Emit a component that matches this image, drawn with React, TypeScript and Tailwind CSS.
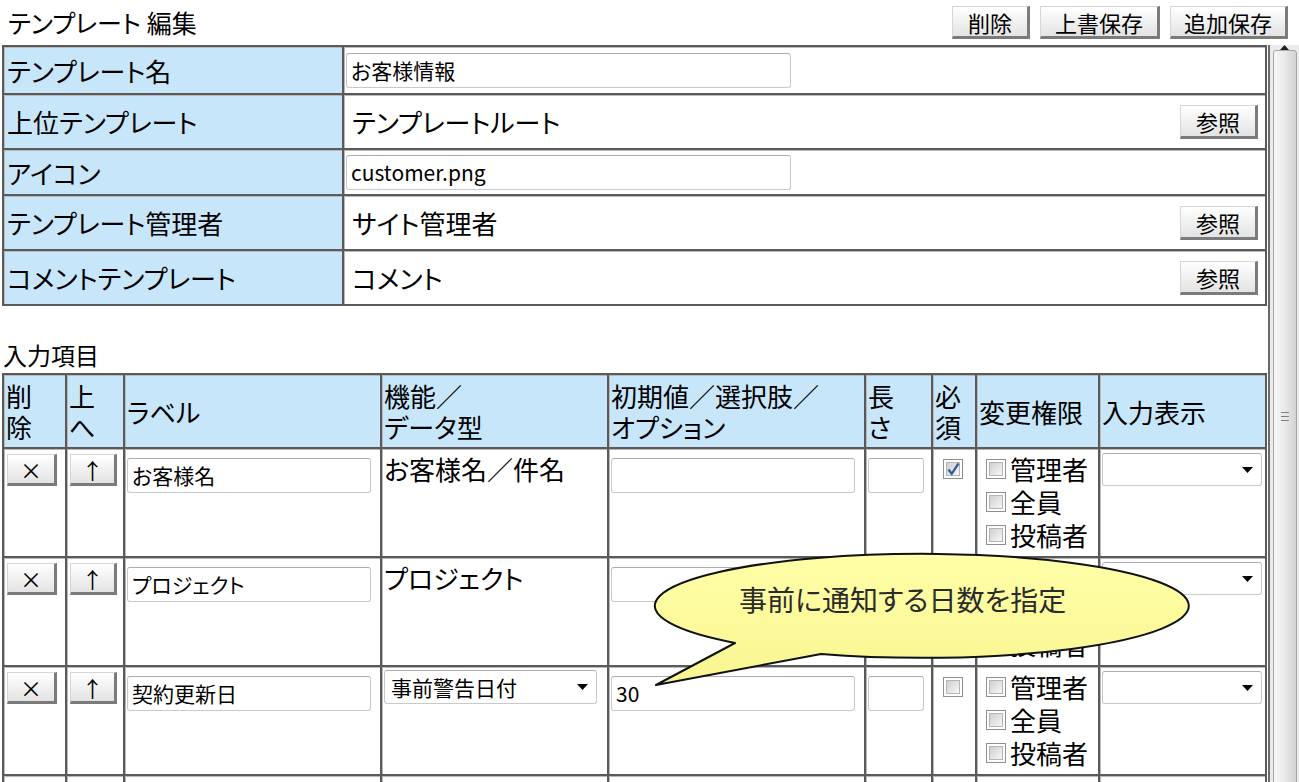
import type { ReactNode } from "react";

const border = "border-l-2 border-t-2 border-[#5a5a5a] shadow-[inset_1px_1px_0_#b8b8b8]";

function Btn({ children, className = "" }: { children: ReactNode; className?: string }) {
  return (
    <button
      type="button"
      className={`flex shrink-0 items-center justify-center border-t border-l border-[#d6d6d6] border-r-[3px] border-b-[3px] border-r-[#7b7b7b] border-b-[#7b7b7b] bg-linear-to-b from-white to-[#e3e3e3] text-[22px] leading-none text-black ${className}`}
    >
      {children}
    </button>
  );
}

function TextBox({ value = "", className = "" }: { value?: string; className?: string }) {
  return (
    <input
      readOnly
      defaultValue={value}
      className={`h-[35px] rounded-[3px] border border-[#c6c9cd] border-t-[#abadb3] bg-white px-[4px] text-[21px] text-black outline-none ${className}`}
    />
  );
}

function Select({ value = "", className = "" }: { value?: string; className?: string }) {
  return (
    <div
      className={`flex h-[33px] items-center justify-between rounded-[3px] border border-[#c6c9cd] border-t-[#abadb3] bg-white pl-[6px] pr-[8px] text-[21px] ${className}`}
    >
      <span>{value}</span>
      <svg width="11" height="6" viewBox="0 0 11 6">
        <path d="M0 0h11L5.5 6z" fill="#000" />
      </svg>
    </div>
  );
}

function Check({ checked = false }: { checked?: boolean }) {
  return (
    <span className="relative inline-flex size-[20px] shrink-0 border border-[#8e8f8f] bg-white p-[2px]">
      <span className="block size-full border border-[#b4b4b4] bg-linear-to-br from-[#cfcfcf] to-[#f7f7f7]" />
      {checked && (
        <svg className="absolute left-[3px] top-[2px]" width="13" height="14" viewBox="0 0 13 14">
          <path d="M1.5 7.5l3.2 4.3L11.5 1.5" fill="none" stroke="#3b5a9a" strokeWidth="2.3" />
        </svg>
      )}
    </span>
  );
}

const props = [
  { label: "テンプレート名", input: "お客様情報", h: "h-[48px]" },
  { label: "上位テンプレート", text: "テンプレートルート", ref: true, h: "h-[55px]" },
  { label: "アイコン", input: "customer.png", h: "h-[46px]" },
  { label: "テンプレート管理者", text: "サイト管理者", ref: true, h: "h-[55px]" },
  { label: "コメントテンプレート", text: "コメント", ref: true, h: "h-[55px]" },
];

function PropsTable() {
  return (
    <div className="grid w-[1265px] grid-cols-[340px_923px] border-r-2 border-b-2 border-[#5a5a5a] text-[26px]">
      {props.map((p) => (
        <div key={p.label} className="contents">
          <div className={`${border} ${p.h} flex items-center bg-[#c8e6fa] pl-[3px]`}>{p.label}</div>
          <div className={`${border} ${p.h} flex items-center justify-between pl-[2px] pr-[7px]`}>
            {p.input !== undefined ? (
              <TextBox value={p.input} className="w-[445px]" />
            ) : (
              <span className="pl-[6px]">{p.text}</span>
            )}
            {p.ref && <Btn className="h-[34px] w-[78px]">参照</Btn>}
          </div>
        </div>
      ))}
    </div>
  );
}

const heads = [
  ["削", "除"],
  ["上", "へ"],
  ["ラベル"],
  ["機能／", "データ型"],
  ["初期値／選択肢／", "オプション"],
  ["長", "さ"],
  ["必", "須"],
  ["変更権限"],
  ["入力表示"],
];

type Row = { label: string; func?: string; funcSelect?: string; init?: string; required?: boolean };

const rows: Row[] = [
  { label: "お客様名", func: "お客様名／件名", required: true },
  { label: "プロジェクト", func: "プロジェクト" },
  { label: "契約更新日", funcSelect: "事前警告日付", init: "30" },
];

function FieldsTable() {
  return (
    <div className="grid w-[1265px] grid-cols-[63px_58px_257px_227px_257px_67px_44px_123px_167px] border-r-2 border-[#5a5a5a] text-[26px]">
      {heads.map((h, i) => (
        <div key={i} className={`${border} flex h-[74px] flex-col justify-center bg-[#c8e6fa] pl-[2px] leading-[31px]`}>
          {h.map((l) => (
            <span key={l}>{l}</span>
          ))}
        </div>
      ))}
      {rows.map((r, i) => (
        <div key={i} className="contents">
          <div className={`${border} h-[109px] pl-[3px] pt-[5px]`}>
            <Btn className="h-[32px] w-[50px] text-[17px]">×</Btn>
          </div>
          <div className={`${border} h-[109px] pl-[3px] pt-[5px]`}>
            <Btn className="h-[32px] w-[47px] text-[20px]">↑</Btn>
          </div>
          <div className={`${border} h-[109px] pl-[2px] pt-[4px]`}>
            <TextBox value={r.label} className="w-[244px]" />
          </div>
          <div className={`${border} h-[109px] pl-[2px] pt-[3px] leading-[33px]`}>
            {r.funcSelect ? <Select value={r.funcSelect} className="h-[34px] w-[213px]" /> : r.func}
          </div>
          <div className={`${border} h-[109px] pl-[2px] pt-[4px]`}>
            <TextBox value={r.init} className="w-[244px]" />
          </div>
          <div className={`${border} h-[109px] pl-[2px] pt-[4px]`}>
            <TextBox className="w-[56px]" />
          </div>
          <div className={`${border} flex h-[109px] justify-center pt-[10px] pr-[3px]`}>
            <Check checked={r.required} />
          </div>
          <div className={`${border} flex h-[109px] flex-col pl-[9px] pt-[3px] leading-[33px]`}>
            {["管理者", "全員", "投稿者"].map((t) => (
              <label key={t} className="flex items-center gap-[4px]">
                <Check />
                {t}
              </label>
            ))}
          </div>
          <div className={`${border} h-[109px] pl-[2px] pt-[4px]`}>
            <Select className="w-[160px]" />
          </div>
        </div>
      ))}
      {heads.map((_, i) => (
        <div key={`next-${i}`} className={`${border} h-[109px]`} />
      ))}
    </div>
  );
}

function Scrollbar() {
  return (
    <div className="flex w-[31px] flex-col items-center border-l-2 border-[#6a6a6a] bg-[#ebebeb]">
      <div className="flex h-[30px] w-full items-center justify-center">
        <svg width="9" height="5" viewBox="0 0 9 5">
          <path d="M0 5h9L4.5 0z" fill="#222" />
        </svg>
      </div>
      <div className="flex h-[760px] w-[24px] shrink-0 justify-center rounded-t-[3px] border border-[#a6a6a6] bg-linear-to-r from-[#f7f7f7] via-[#e9e9e9] to-[#d2d2d2] pt-[361px]">
        <div className="flex h-[9px] w-[8px] flex-col justify-between">
          <span className="h-px bg-[#808080]" />
          <span className="h-px bg-[#808080]" />
          <span className="h-px bg-[#808080]" />
        </div>
      </div>
    </div>
  );
}

function Callout() {
  return (
    <svg className="pointer-events-none absolute left-0 top-0" width="1299" height="782" viewBox="0 0 1299 782">
      <defs>
        <linearGradient id="cg" x1="0" y1="0" x2="0" y2="1">
          <stop offset="0" stopColor="#ffffa8" />
          <stop offset="1" stopColor="#f8f590" />
        </linearGradient>
      </defs>
      <path
        d="M735 643 L656 685 L821 654 A267 52 0 1 0 735 643 Z"
        fill="url(#cg)"
        stroke="#111"
        strokeWidth="2"
        strokeLinejoin="round"
      />
      <text
        x="739"
        y="599"
        dominantBaseline="central"
        fontSize="28"
        fill="#2b2b2b"
        fontFamily="'Noto Sans CJK JP', sans-serif"
      >
        事前に通知する日数を指定
      </text>
    </svg>
  );
}

export default function App() {
  return (
    <div className="relative h-[782px] w-[1299px] overflow-hidden bg-white font-['Noto_Sans_CJK_JP','Noto_Sans',sans-serif] text-black [font-feature-settings:'palt']">
      <header className="flex h-[45px] items-center justify-between pl-[8px] pr-[11px]">
        <h1 className="text-[25px] leading-none">テンプレート 編集</h1>
        <div className="flex gap-[10px]">
          <Btn className="h-[33px] w-[78px]">削除</Btn>
          <Btn className="h-[33px] w-[120px]">上書保存</Btn>
          <Btn className="h-[33px] w-[118px]">追加保存</Btn>
        </div>
      </header>
      <div className="flex h-[737px]">
        <main className="w-[1268px] shrink-0 overflow-hidden pl-[2px]">
          <PropsTable />
          <p className="mt-[34px] h-[33px] pl-[1px] text-[24px] leading-[30px]">入力項目</p>
          <FieldsTable />
        </main>
        <Scrollbar />
      </div>
      <Callout />
    </div>
  );
}
